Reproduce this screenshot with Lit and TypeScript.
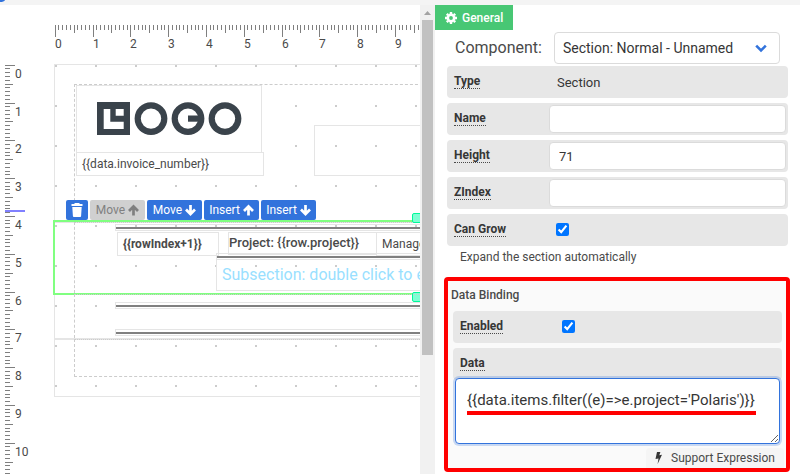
import { LitElement, html, svg, css } from "lit";
import { customElement } from "lit/decorators.js";
import { styleMap } from "lit/directives/style-map.js";

const CM = 37.8;

const tickLength = (i: number, major: number) => (i % 10 === 0 ? major : i % 5 === 0 ? 8 : 5);

@customElement("ruler-bar")
class RulerBar extends LitElement {
  static properties = { vertical: { type: Boolean, reflect: true } };
  declare vertical: boolean;

  static styles = css`
    :host { display: block; overflow: hidden; min-width: 0; min-height: 0; }
    svg { display: block; }
    rect { fill: #7f7f7f; }
    text { font: 12px Roboto, "Liberation Sans", sans-serif; fill: #4a4a4a; }
    .cursor { fill: #8080ff; }
  `;

  render() {
    const v = this.vertical;
    const ticks = Array.from({ length: 205 }, (_, i) => i);
    const at = (i: number) => Math.floor((i * CM) / 10 + 0.2);
    return v
      ? html`<svg width="50" height="780" shape-rendering="crispEdges">
          ${ticks.map((i) => svg`<rect x="5" y=${at(i) + 1} width=${tickLength(i, 10)} height="1"></rect>`)}
          ${ticks.filter((i) => i % 10 === 0).map((i) => svg`<text x="15" y=${at(i) + 14}>${i / 10}</text>`)}
          <rect class="cursor" x="5" y="146" width="20" height="2"></rect>
        </svg>`
      : html`<svg width="780" height="30" shape-rendering="crispEdges">
          ${ticks.map((i) => svg`<rect x=${at(i) + 1} y="0" width="1" height=${tickLength(i, 12)}></rect>`)}
          ${ticks.filter((i) => i % 10 === 0).map((i) => svg`<text x=${at(i) + 1} y="23">${i / 10}</text>`)}
        </svg>`;
  }
}

interface Item {
  kind: "box" | "rule" | "logo" | "sub";
  x: number;
  y: number;
  w: number;
  h: number;
  text?: string;
  bold?: boolean;
  tight?: boolean;
}

interface Section {
  height: number;
  edge?: "first" | "last";
  selected?: boolean;
  items: Item[];
}

const SECTIONS: Section[] = [
  {
    height: 157,
    edge: "first",
    items: [
      { kind: "logo", x: 21, y: 20, w: 186, h: 68 },
      { kind: "box", x: 21, y: 87, w: 188, h: 24, text: "{{data.invoice_number}}" },
      { kind: "box", x: 259, y: 60, w: 300, h: 51 },
    ],
  },
  {
    height: 72,
    selected: true,
    items: [
      { kind: "rule", x: 60, y: 2, w: 620, h: 7 },
      { kind: "box", x: 62, y: 10, w: 102, h: 24, text: "{{rowIndex+1}}", bold: true },
      { kind: "box", x: 173, y: 10, w: 149, h: 23, text: "Project: {{row.project}}", tight: true },
      { kind: "box", x: 321, y: 10, w: 120, h: 24, text: "Manager" },
      { kind: "rule", x: 161, y: 31, w: 500, h: 7 },
      { kind: "sub", x: 161, y: 37, w: 500, h: 32, text: "Subsection: double click to edit" },
    ],
  },
  {
    height: 45,
    items: [
      { kind: "rule", x: 60, y: 8, w: 620, h: 7 },
      { kind: "rule", x: 60, y: 35, w: 620, h: 7 },
    ],
  },
  { height: 57, edge: "last", items: [] },
];

const logo = html`<svg viewBox="0 0 184 66" width="184" height="66" role="img" aria-label="Logo">
  <path fill="#3a434b" fill-rule="evenodd"
    d="M20 16h33v33H20zM26.700 23v20h20v-7.300h-13.400v-12.700zM38.700 23v6.700h8v-6.700z" />
  <g fill="none" stroke="#3a434b" stroke-width="6.200">
    <circle cx="74" cy="32.600" r="13.300" />
    <circle cx="111" cy="32.600" r="13.300" />
    <circle cx="148" cy="32.600" r="13.300" />
  </g>
  <path fill="#3a434b" d="M111 29.500h13v6.200h-13z" />
</svg>`;

const arrow = (down: boolean) => html`<svg width="11" height="12" viewBox="0 0 11 12" aria-hidden="true">
  <path d=${down ? "M5.500 1v8.500M1 5.500l4.500 4.500 4.500-4.500" : "M5.500 11.500V3M1 7l4.500-4.500 4.500 4.500"}
    fill="none" stroke="currentColor" stroke-width="2.700" />
</svg>`;

@customElement("report-canvas")
class ReportCanvas extends LitElement {
  static styles = css`
    :host {
      display: grid;
      grid-template: 59px minmax(0, 1fr) / 54px minmax(0, 1fr);
      overflow: hidden;
      min-width: 0;
      background: #fff;
      font: 12px/18px Roboto, "Liberation Sans", sans-serif;
      color: #4a4a4a;
    }
    .across { grid-column: 2; padding-top: 20px; }
    .page {
      position: relative;
      align-self: start;
      width: 748px;
      border: 1px solid #e5e5e5;
      background: conic-gradient(at 2px 2px, transparent 75%, #ccc 0) 0 0 / 40px 40px;
    }
    .section {
      position: relative;
      box-sizing: border-box;
      border-bottom: 1px solid #e5e5e5;
      box-shadow: 0 1px #e5e5e5;
    }
    .section.last { border-bottom: 0; box-shadow: none; }
    .margin {
      position: absolute;
      inset: 0 19px;
      border: 0 dashed #ccc;
      border-width: 0 1px;
      border-top: 1px dotted #ccc;
    }
    .first .margin { top: 19px; border-top-style: dashed; }
    .last .margin { bottom: 19px; border-bottom-width: 1px; }
    .selection { position: absolute; inset: -2px; border: 2px solid #80ff80; }
    .handle {
      position: absolute;
      left: 357px;
      top: -9px;
      box-sizing: border-box;
      width: 10px;
      height: 10px;
      border: 1px solid #00fa9a;
      border-radius: 2px;
      background: #7fffd4;
    }
    .handle.end { top: auto; bottom: -9px; }
    .item {
      position: absolute;
      box-sizing: border-box;
      display: flex;
      align-items: center;
      border: 1px solid #e5e5e5;
      padding: 0 5px;
      white-space: nowrap;
    }
    .logo { padding: 0; background: #fff; }
    .rule { padding: 0; }
    .rule hr { flex: 1; height: 2px; margin: 0; border: 0; background: #808080; }
    .sub { font-size: 16px; color: #99dfff; }
    .bold { font-weight: 700; }
    .tight { padding: 0 0 2px; font-size: 13px; font-weight: 500; }
    .tools { position: absolute; left: 11px; bottom: 100%; display: flex; gap: 2px; padding-bottom: 2px; }
    .tools button {
      display: flex;
      align-items: center;
      justify-content: center;
      gap: 3px;
      box-sizing: border-box;
      width: 55px;
      height: 20px;
      border: 0;
      border-radius: 2px;
      padding: 0;
      background: #3273dc;
      color: #fff;
      font: inherit;
    }
    .tools .icon { width: 22px; }
    .tools button:disabled { background: #d0d0d0; color: #808080; }
  `;

  item(i: Item) {
    const cls = `item ${i.kind} ${i.bold ? "bold" : ""} ${i.tight ? "tight" : ""}`;
    const box = { left: `${i.x}px`, top: `${i.y}px`, width: `${i.w}px`, height: `${i.h}px` };
    return html`<div class=${cls} style=${styleMap(box)}>
      ${i.kind === "logo" ? logo : i.kind === "rule" ? html`<hr />` : i.text}
    </div>`;
  }

  selection() {
    return html`<div class="selection"></div>
      <div class="handle"></div>
      <div class="handle end"></div>
      <div class="tools">
        <button class="icon" aria-label="Delete">
          <svg width="12" height="14" viewBox="0 0 12 14" aria-hidden="true">
            <path fill="currentColor" d="M4 0h4l1 1h2.500v2H.5V1H3zM1.300 4h9.400l-.6 9a1 1 0 0 1-1 1H2.900a1 1 0 0 1-1-1z" />
          </svg>
        </button>
        <button disabled>Move ${arrow(false)}</button>
        <button>Move ${arrow(true)}</button>
        <button>Insert ${arrow(false)}</button>
        <button>Insert ${arrow(true)}</button>
      </div>`;
  }

  render() {
    return html`
      <ruler-bar class="across"></ruler-bar>
      <ruler-bar vertical></ruler-bar>
      <div class="page">
        ${SECTIONS.map(
          (s) => html`<div class="section ${s.edge ?? ""}" style=${styleMap({ height: `${s.height}px` })}>
            <div class="margin"></div>
            ${s.items.map((i) => this.item(i))}
            ${s.selected ? this.selection() : ""}
          </div>`
        )}
      </div>
    `;
  }
}

@customElement("property-panel")
class PropertyPanel extends LitElement {
  static styles = css`
    :host {
      display: block;
      background: #fff;
      color: #4a4a4a;
      font: 12px/18px Roboto, "Liberation Sans", sans-serif;
      overflow: hidden;
    }
    .tab {
      display: flex;
      align-items: center;
      gap: 5px;
      height: 25px;
      border: 0;
      padding: 0 10px;
      background: #48c774;
      color: #fff;
      font: inherit;
      font-weight: 500;
    }
    .component { display: flex; align-items: center; gap: 12px; margin: 2px 20px; }
    .component label { font-size: 16px; }
    .picker { position: relative; flex: 1; display: flex; }
    .picker svg { position: absolute; right: 13px; top: 12px; pointer-events: none; }
    select {
      appearance: none;
      flex: 1;
      height: 32px;
      border: 1px solid #dbdbdb;
      border-radius: 4px;
      padding: 0 8px;
      background: #fff;
      color: #363636;
      font: 14px Roboto, "Liberation Sans", sans-serif;
    }
    .rows { display: grid; gap: 5px; margin: 0 12px; }
    .row {
      display: grid;
      grid-template-columns: 95px minmax(0, 1fr);
      align-items: center;
      box-sizing: border-box;
      height: 32px;
      border-radius: 4px;
      padding: 0 2px 0 7px;
      background: #e7e7e7;
    }
    .name {
      justify-self: start;
      margin-bottom: 1px;
      border-bottom: 1px dotted #4a4a4a;
      line-height: 13px;
      font-weight: 700;
      color: #363636;
    }
    .value { padding: 2px 0 0 8px; font-size: 13px; color: #363636; }
    .field {
      box-sizing: border-box;
      width: 100%;
      height: 28px;
      border: 1px solid #dbdbdb;
      border-radius: 4px;
      padding: 0 9px;
      background: #fff;
      color: #363636;
      font: 13px Roboto, "Liberation Sans", sans-serif;
    }
    .check { width: 13px; height: 13px; margin: 0 0 2px 7px; }
    .help { margin: 2px 25px 0; }
    .binding {
      margin: 11px 10px 0 9px;
      border: 4px solid #f00;
      border-radius: 4px;
      padding: 0 4px 0 5px;
      background: #fafafa;
    }
    .binding .rows { margin: 0; }
    h2 { margin: 0 0 0 -2px; padding: 5px 0 7px; font-size: 12px; line-height: 18px; font-weight: 500; }
    .editor { display: grid; position: relative; margin: -2px 2px 0; }
    textarea {
      box-sizing: border-box;
      width: 100%;
      height: 66px;
      border: 1px solid #3273dc;
      border-radius: 4px;
      padding: 10px 11px;
      outline: 0;
      box-shadow: 0 0 0 2px #3273dc40;
      color: #363636;
      font: 15px/22px Roboto, "Liberation Sans", sans-serif;
    }
    .stroke { position: absolute; left: 12px; top: 33px; width: 289px; height: 4px; background: #f00; }
    .support {
      display: flex;
      align-items: center;
      gap: 9px;
      width: max-content;
      height: 20px;
      margin: 4px -2px 0 auto;
      padding: 0 9px;
      border-radius: 4px 4px 0 0;
      background: #f5f5f5;
    }
  `;

  render() {
    return html`
      <button class="tab">
        <svg width="12" height="12" viewBox="0 0 12 12" aria-hidden="true">
          <circle cx="6" cy="6" r="3.200" fill="none" stroke="#fff" stroke-width="2.600" />
          <g stroke="#fff" stroke-width="2.400">
            <path d="M6 0v2M6 10v2M0 6h2M10 6h2M1.800 1.800l1.300 1.300M8.900 8.900l1.300 1.300M1.800 10.200l1.300-1.300M8.900 3.100l1.300-1.300" />
          </g>
        </svg>
        General
      </button>
      <div class="component">
        <label for="component">Component:</label>
        <div class="picker">
          <select id="component"><option>Section: Normal - Unnamed</option></select>
          <svg width="12" height="9" viewBox="0 0 12 9" aria-hidden="true">
            <path d="M1.200 1.700L6 6.500l4.800-4.800" fill="none" stroke="#3273dc" stroke-width="2.600" />
          </svg>
        </div>
      </div>
      <div class="rows">
        <div class="row"><span class="name">Type</span><span class="value">Section</span></div>
        <div class="row"><label class="name" for="name">Name</label><input class="field" id="name" /></div>
        <div class="row"><label class="name" for="height">Height</label><input class="field" id="height" value="71" /></div>
        <div class="row"><label class="name" for="zindex">ZIndex</label><input class="field" id="zindex" /></div>
        <div class="row"><label class="name" for="grow">Can Grow</label><input class="check" id="grow" type="checkbox" checked /></div>
      </div>
      <div class="help">Expand the section automatically</div>
      <section class="binding">
        <h2>Data Binding</h2>
        <div class="rows">
          <div class="row"><label class="name" for="enabled">Enabled</label><input class="check" id="enabled" type="checkbox" checked /></div>
          <div class="row"><label class="name" for="data">Data</label></div>
        </div>
        <div class="editor">
          <textarea id="data" spellcheck="false" .value=${"{{data.items.filter((e)=>e.project='Polaris')}}"}></textarea>
          <div class="stroke"></div>
        </div>
        <div class="support">
          <svg width="7" height="12" viewBox="0 0 7 12" aria-hidden="true">
            <path fill="#363636" d="M2 0h3.400L4.300 3.300l2.700-.5L2.600 12l.9-5.600-3 .6z" />
          </svg>
          Support Expression
        </div>
      </section>
    `;
  }
}

@customElement("app-root")
class AppRoot extends LitElement {
  static styles = css`
    :host {
      display: grid;
      grid-template: 5px minmax(0, 1fr) / minmax(0, 1fr) 15px 365px;
      height: 100vh;
      background: #fff;
    }
    .strip { grid-column: 1 / -1; background: #f4f4f4; }
    .strip svg { display: block; }
    .scroll {
      display: grid;
      grid-template-rows: 15px 335px;
      justify-content: center;
      background: #f1f1f1;
    }
    .scroll svg { align-self: center; }
    .thumb { width: 11px; background: #c1c1c1; }
  `;

  render() {
    return html`
      <div class="strip">
        <svg width="6" height="3" aria-hidden="true"><path d="M0 0h5q-1 2-5 2z" fill="#3273dc" /></svg>
      </div>
      <report-canvas></report-canvas>
      <div class="scroll">
        <svg width="11" height="5" viewBox="0 0 11 5" aria-hidden="true"><path d="M2 5l3.500-4L9 5z" fill="#a3a3a3" /></svg>
        <div class="thumb"></div>
      </div>
      <property-panel></property-panel>
    `;
  }
}
